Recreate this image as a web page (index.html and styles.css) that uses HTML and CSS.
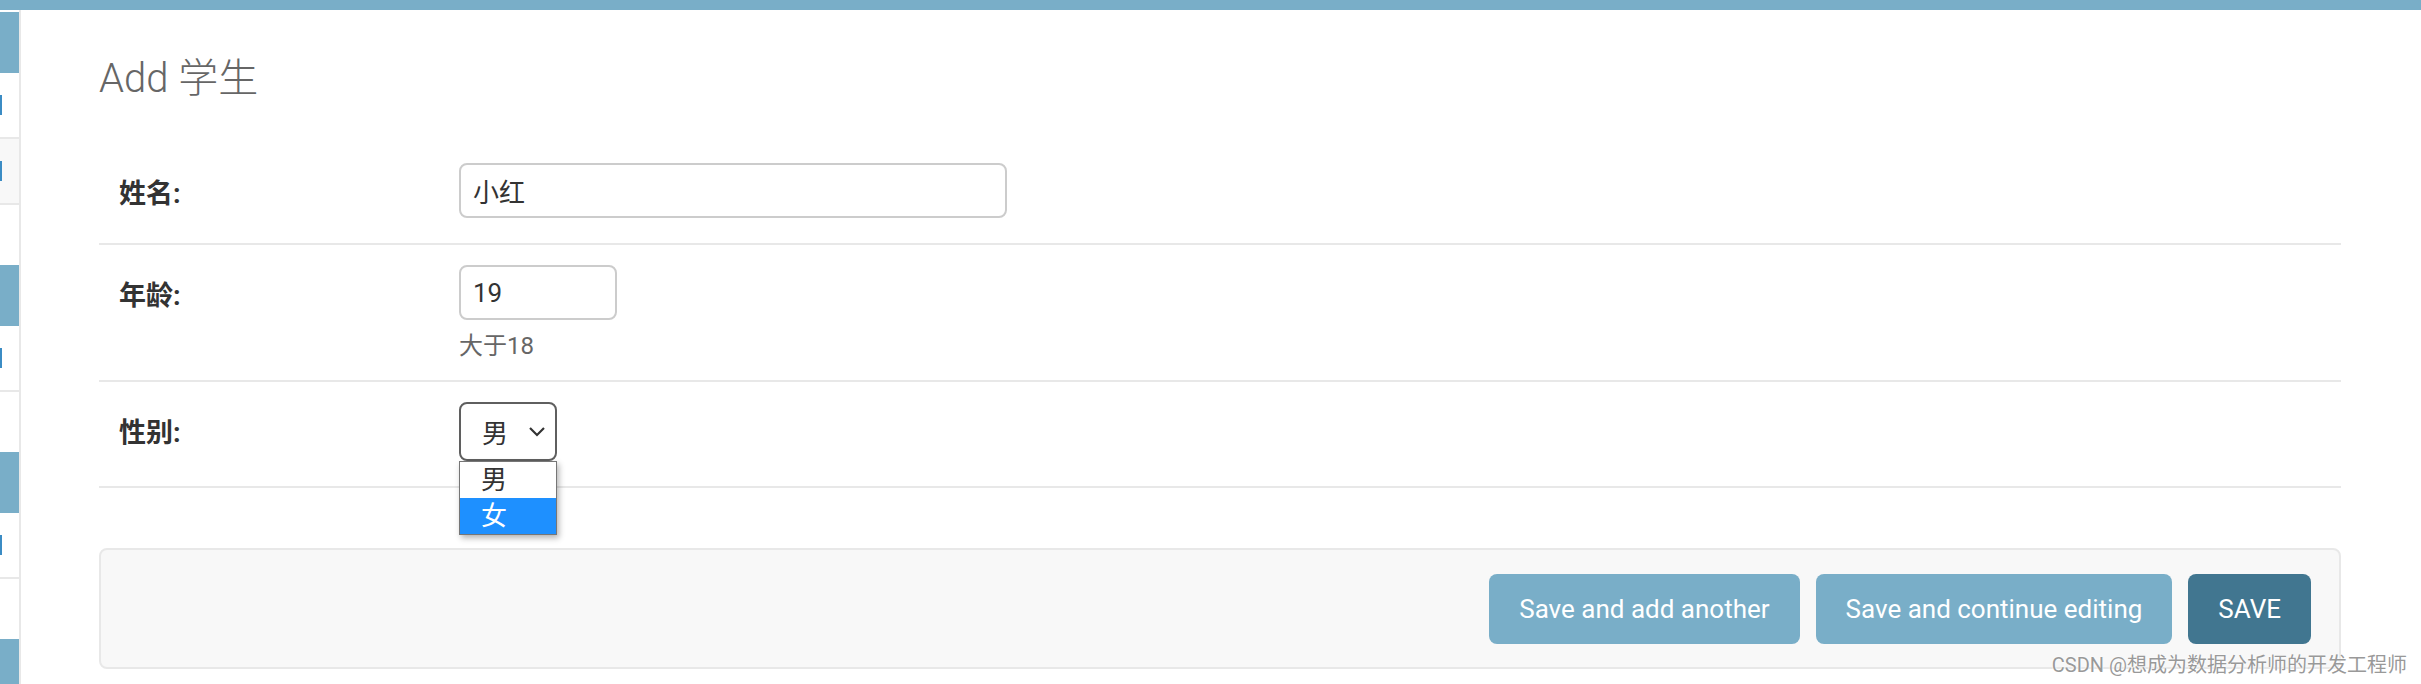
FILE: index.html
```html
<!DOCTYPE html>
<html lang="zh-CN">
<head>
<meta charset="utf-8">
<title>Add 学生</title>
<link rel="stylesheet" href="styles.css">
</head>
<body>
<div class="topbar"></div>
<div class="layout">
  <nav class="sidebar">
    <div class="module">
      <div class="caption"></div>
      <div class="navrow"><span class="mark"></span></div>
      <div class="navrow current"><span class="mark"></span></div>
    </div>
    <div class="module">
      <div class="caption"></div>
      <div class="navrow"><span class="mark"></span></div>
    </div>
    <div class="module">
      <div class="caption"></div>
      <div class="navrow"><span class="mark"></span></div>
    </div>
    <div class="module">
      <div class="caption"></div>
    </div>
  </nav>
  <main class="content">
    <h1 class="title">Add 学生</h1>
    <form class="form">
      <div class="form-row">
        <label class="label">姓名:</label>
        <div class="field">
          <input class="input input-name" type="text" value="小红">
        </div>
      </div>
      <div class="form-row">
        <label class="label">年龄:</label>
        <div class="field">
          <input class="input input-age" type="text" value="19">
          <div class="help">大于18</div>
        </div>
      </div>
      <div class="form-row">
        <label class="label">性别:</label>
        <div class="field">
          <div class="select">
            <span class="select-value">男</span>
            <svg class="chevron" width="18" height="12" viewBox="0 0 18 12"><path d="M2 2 L9 9 L16 2" fill="none" stroke="#333" stroke-width="2.2"/></svg>
            <ul class="options">
              <li class="option">男</li>
              <li class="option option-active">女</li>
            </ul>
          </div>
        </div>
      </div>
      <div class="submit-row">
        <button type="button" class="btn">Save and add another</button>
        <button type="button" class="btn">Save and continue editing</button>
        <button type="button" class="btn btn-default">SAVE</button>
      </div>
    </form>
  </main>
</div>
<div class="watermark">CSDN @想成为数据分析师的开发工程师</div>
</body>
</html>
```

FILE: styles.css
```css
html, body {
  margin: 0;
  padding: 0;
  height: 684px;
  overflow: hidden;
  background: #fff;
}
body {
  font-family: Roboto, "Noto Sans CJK SC", sans-serif;
  color: #333;
  position: relative;
}
.topbar {
  height: 10px;
  background: #79aec8;
}
.layout {
  display: flex;
  align-items: stretch;
  height: 674px;
}
.sidebar {
  width: 19px;
  flex: none;
  border-right: 2px solid #e8e8e8;
  padding-top: 2px;
  overflow: hidden;
}
.module {
  margin-bottom: 60px;
}
.caption {
  height: 61px;
  background: #79aec8;
}
.navrow {
  height: 64px;
  border-bottom: 2px solid #e8e8e8;
  display: flex;
  align-items: center;
}
.navrow.current {
  background: #f8f8f8;
}
.mark {
  width: 2px;
  height: 20px;
  background: #3b8cc4;
}
.content {
  flex: 1;
  padding: 0 80px 0 78px;
}
.title {
  margin: 44px 0 0;
  font-size: 40px;
  line-height: 50px;
  font-weight: 300;
  color: #666;
}
.form {
  margin-top: 39px;
}
.form-row {
  display: flex;
  align-items: flex-start;
  padding: 20px 0 25px 20px;
  border-bottom: 2px solid #e8e8e8;
}
.form-row:nth-child(2) {
  padding-bottom: 18px;
}
.label {
  width: 340px;
  flex: none;
  font-size: 27px;
  font-weight: bold;
  line-height: 47px;
  padding-top: 8px;
  color: #333;
}
.field {
  display: flex;
  flex-direction: column;
}
.input {
  box-sizing: border-box;
  height: 55px;
  border: 2px solid #ccc;
  border-radius: 8px;
  padding: 0 12px;
  font-family: Roboto, "Noto Sans CJK SC", sans-serif;
  font-size: 26px;
  color: #333;
  background: #fff;
  outline: none;
}
.input-name {
  width: 548px;
}
.input-age {
  width: 158px;
}
.help {
  margin-top: 10px;
  font-size: 24px;
  line-height: 32px;
  color: #666;
}
.select {
  position: relative;
  box-sizing: border-box;
  width: 98px;
  height: 59px;
  border: 2px solid #5f5f5f;
  border-radius: 8px;
  display: flex;
  align-items: center;
  padding-left: 21px;
  font-size: 26px;
  color: #333;
}
.select-value {
  flex: 1;
}
.chevron {
  margin-right: 9px;
}
.options {
  position: absolute;
  left: -2px;
  top: 57px;
  width: 98px;
  box-sizing: border-box;
  margin: 0;
  padding: 0;
  list-style: none;
  border: 1px solid #767676;
  background: #fff;
  box-shadow: 2px 3px 6px rgba(0, 0, 0, 0.3);
  z-index: 2;
}
.option {
  height: 36px;
  line-height: 36px;
  padding-left: 21px;
  font-size: 26px;
  color: #333;
}
.option-active {
  background: #1e90ff;
  color: #fff;
}
.submit-row {
  margin-top: 60px;
  display: flex;
  justify-content: flex-end;
  gap: 16px;
  padding: 24px 28px 23px;
  background: #f8f8f8;
  border: 2px solid #e8e8e8;
  border-radius: 8px;
}
.btn {
  height: 70px;
  padding: 0 30px;
  border: none;
  border-radius: 8px;
  background: #79aec8;
  color: #fff;
  font-family: Roboto, sans-serif;
  font-size: 26px;
  line-height: 30px;
  cursor: pointer;
}
.btn-default {
  background: #417690;
}
.watermark {
  position: absolute;
  right: 14px;
  bottom: 8px;
  font-size: 20px;
  line-height: 22px;
  color: #999;
  text-shadow: 0 0 2px #fff, 0 0 2px #fff;
  white-space: nowrap;
}
```
